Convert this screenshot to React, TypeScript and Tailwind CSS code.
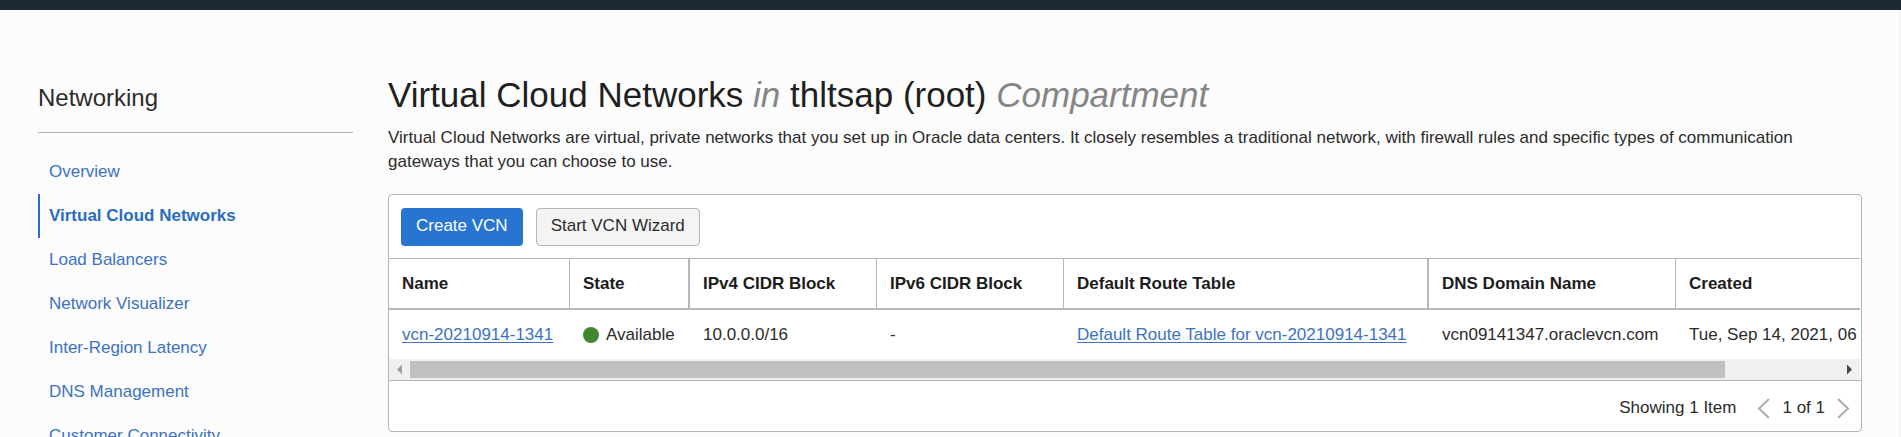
import React from "react";

const navItems = [
  "Overview",
  "Virtual Cloud Networks",
  "Load Balancers",
  "Network Visualizer",
  "Inter-Region Latency",
  "DNS Management",
  "Customer Connectivity",
];

const columns = [
  { label: "Name", className: "w-[181px] border-r" },
  { label: "State", className: "w-[120px] border-r-2" },
  { label: "IPv4 CIDR Block", className: "w-[187px] border-r" },
  { label: "IPv6 CIDR Block", className: "w-[187px] border-r" },
  { label: "Default Route Table", className: "w-[365px] border-r-2" },
  { label: "DNS Domain Name", className: "w-[247px] border-r" },
  { label: "Created", className: "w-[313px]" },
];

function Sidebar() {
  return (
    <aside className="w-[315px] shrink-0">
      <h2 className="border-b border-[#b0b5b5] pb-[18px] text-2xl leading-8">Networking</h2>
      <nav className="mt-[17px]" aria-label="Networking">
        <ul>
          {navItems.map((item) => {
            const active = item === "Virtual Cloud Networks";
            return (
              <li key={item}>
                <a
                  href="#"
                  aria-current={active ? "page" : undefined}
                  className={
                    active
                      ? "flex h-11 items-center border-l-2 border-[#2a6fc4] pl-[9px] font-bold text-[#2a6cbf]"
                      : "flex h-11 items-center border-l-2 border-transparent pl-[9px] text-[#3d72c0]"
                  }
                >
                  {item}
                </a>
              </li>
            );
          })}
        </ul>
      </nav>
    </aside>
  );
}

function VcnTable() {
  return (
    <div className="mr-px overflow-hidden">
      <table className="w-[1600px] table-fixed border-separate border-spacing-0 whitespace-nowrap text-left">
        <thead>
          <tr>
            {columns.map((c) => (
              <th
                key={c.label}
                scope="col"
                className={`h-[52px] border-t border-b-2 border-t-[#b5b5b5] border-r-[#b4b7bb] border-b-[#b4b7bb] pr-0 pl-[13px] font-bold text-[#1c1c1c] ${c.className}`}
              >
                {c.label}
              </th>
            ))}
          </tr>
        </thead>
        <tbody>
          <tr className="h-[49px]">
            <td className="pl-[13px]">
              <a href="#" className="text-[#3d72c0] underline underline-offset-2">vcn-20210914-1341</a>
            </td>
            <td className="pl-[13px]">
              <span className="flex items-center gap-[7px]">
                <span className="size-4 rounded-full bg-[#42872f]" />
                Available
              </span>
            </td>
            <td className="pl-[13px]">10.0.0.0/16</td>
            <td className="pl-[13px]">-</td>
            <td className="pl-[13px]">
              <a href="#" className="text-[#3d72c0] underline underline-offset-2">
                Default Route Table for vcn-20210914-1341
              </a>
            </td>
            <td className="pl-[13px]">vcn09141347.oraclevcn.com</td>
            <td className="pl-[13px]">Tue, Sep 14, 2021, 06</td>
          </tr>
        </tbody>
      </table>
      <div aria-hidden="true" className="flex h-[21px] items-center bg-[#f0f0f0]">
        <svg width="21" height="21" viewBox="0 0 21 21" className="shrink-0">
          <path d="M13 5.5v10L8 10.5z" fill="#a0a0a0" />
        </svg>
        <div className="h-[17px] flex-1">
          <div className="h-full w-[92%] bg-[#c0c0c0]" />
        </div>
        <svg width="21" height="21" viewBox="0 0 21 21" className="shrink-0">
          <path d="M8 5.5v10l5-5z" fill="#454545" />
        </svg>
      </div>
    </div>
  );
}

function Pager() {
  return (
    <div className="flex h-[51px] items-center justify-end border-t border-[#b5b5b5] pt-1 pr-[11px]">
      <span className="mr-[21px]">Showing 1 Item</span>
      <button type="button" aria-label="Previous page" className="mr-3">
        <svg width="13" height="22" viewBox="0 0 13 22" fill="none" stroke="#adadad" strokeWidth="2">
          <path d="M12 2L2 11.5L12 21" />
        </svg>
      </button>
      <span>1 of 1</span>
      <button type="button" aria-label="Next page" className="ml-3">
        <svg width="13" height="22" viewBox="0 0 13 22" fill="none" stroke="#adadad" strokeWidth="2">
          <path d="M1 2L11 11.5L1 21" />
        </svg>
      </button>
    </div>
  );
}

export default function App() {
  return (
    <div className="flex h-screen flex-col overflow-hidden bg-[#fcfcfc] font-['Liberation_Sans',Arial,sans-serif] text-[17px] leading-6 text-[#2b2b2b]">
      <header className="h-[10px] shrink-0 bg-[#1f2936]" />
      <div className="flex min-h-0 flex-1 gap-[35px] border-r-2 border-[#f3f3f3] pr-[37px] pl-[38px]">
        <div className="flex pt-[72px]">
          <Sidebar />
        </div>
        <main className="min-w-0 flex-1 pt-16">
          <h1 className="text-[35px] leading-[42px] text-[#1f1f1f]">
            Virtual Cloud Networks <em className="text-[#858585]">in</em> thltsap (root){" "}
            <em className="text-[#858585]">Compartment</em>
          </h1>
          <p className="mt-[10px]">
            Virtual Cloud Networks are virtual, private networks that you set up in Oracle data centers. It closely
            resembles a traditional network, with firewall rules and specific types of communication gateways that you
            can choose to use.
          </p>
          <section className="mt-5 rounded border border-[#b5b5b5] bg-white">
            <div className="flex gap-[13px] px-3 pt-[13px] pb-3">
              <button type="button" className="h-[38px] rounded-sm bg-[#2775d1] px-[15px] pb-0.5 text-white">
                Create VCN
              </button>
              <button type="button" className="h-[38px] rounded-sm border border-[#b5b5b5] bg-[#f4f4f4] px-[14px] pb-0.5">
                Start VCN Wizard
              </button>
            </div>
            <VcnTable />
            <Pager />
          </section>
        </main>
      </div>
    </div>
  );
}
